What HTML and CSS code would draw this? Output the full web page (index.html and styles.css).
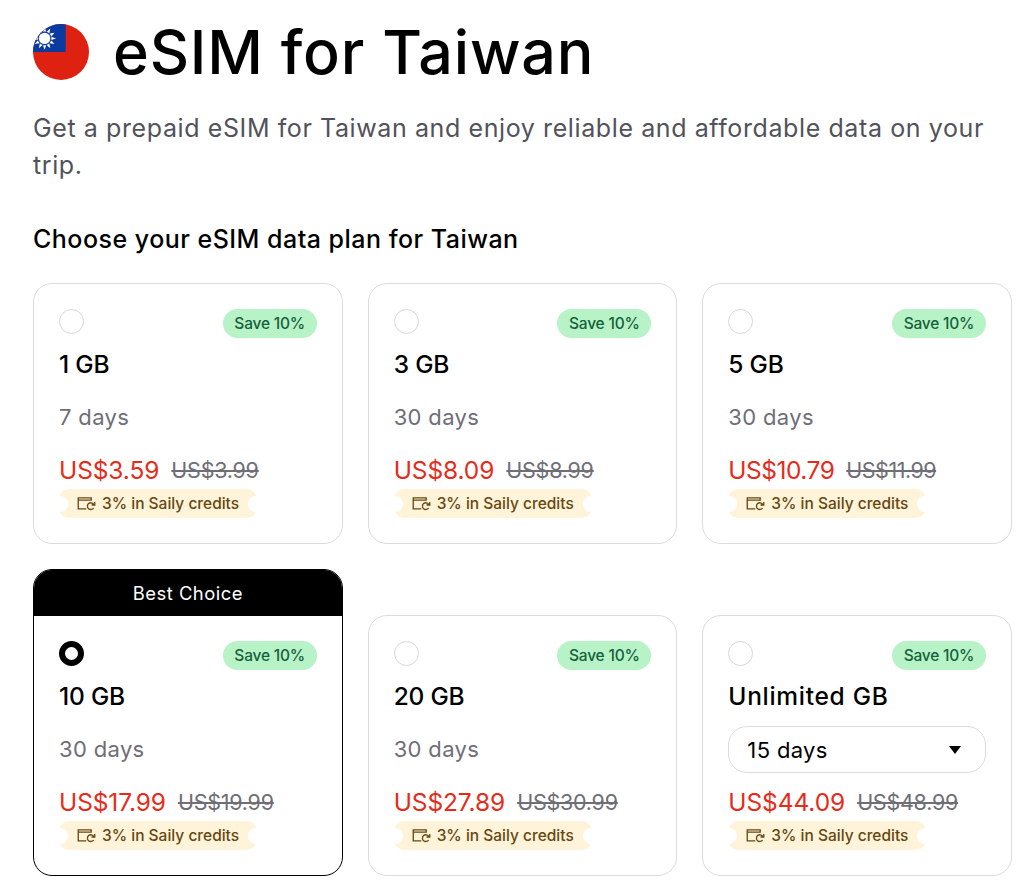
FILE: index.html
```
<!DOCTYPE html>
<html lang="en">

<head>
	<meta charset="UTF-8">
	<meta name="viewport" content="width=device-width, initial-scale=1.0">
	<title>eSIM for Taiwan</title>
	<link rel="stylesheet" href="styles.css">
</head>

<body>
	<!-- shared icon -->
	<svg class="sprite" width="0" height="0">
		<symbol id="wallet" viewBox="0 0 20 16">
			<path d="M15 5V1.9H1.2v11.8h8.6M1.2 4.4h13.8" />
			<path d="M17.6 12.8A3.6 3.6 0 1 1 17.6 8.8M18.8 6.4v3.2h-3.4" />
		</symbol>
	</svg>

	<header class="title">
		<svg class="flag" viewBox="0 0 56 56">
			<clipPath id="round"><circle cx="28" cy="28" r="28" /></clipPath>
			<g clip-path="url(#round)">
				<rect width="56" height="56" fill="#de2110" />
				<rect width="32.7" height="28" fill="#0b3aa0" />
				<g transform="translate(11.6 14.4)" fill="#fff">
					<g id="rays">
						<path d="M-1.6-6.8L0-11.4L1.6-6.8zM-1.6 6.8L0 11.4L1.6 6.8z" />
						<path d="M-1.6-6.8L0-11.4L1.6-6.8zM-1.6 6.8L0 11.4L1.6 6.8z" transform="rotate(30)" />
						<path d="M-1.6-6.8L0-11.4L1.6-6.8zM-1.6 6.8L0 11.4L1.6 6.8z" transform="rotate(60)" />
					</g>
					<use href="#rays" transform="rotate(90)" />
					<circle r="5.7" />
				</g>
			</g>
		</svg>
		<h1>eSIM for Taiwan</h1>
	</header>
	<p class="intro">Get a prepaid eSIM for Taiwan and enjoy reliable and affordable data on your trip.</p>
	<h2>Choose your eSIM data plan for Taiwan</h2>

	<div class="plans">
		<div class="plan">
			<div class="top"><span class="radio"></span><span class="save">Save 10%</span></div>
			<h3>1 GB</h3>
			<div class="days">7 days</div>
			<div class="price">US$3.59 <s>US$3.99</s></div>
			<div class="credits"><svg><use href="#wallet" /></svg>3% in Saily credits</div>
		</div>
		<div class="plan">
			<div class="top"><span class="radio"></span><span class="save">Save 10%</span></div>
			<h3>3 GB</h3>
			<div class="days">30 days</div>
			<div class="price">US$8.09 <s>US$8.99</s></div>
			<div class="credits"><svg><use href="#wallet" /></svg>3% in Saily credits</div>
		</div>
		<div class="plan">
			<div class="top"><span class="radio"></span><span class="save">Save 10%</span></div>
			<h3>5 GB</h3>
			<div class="days">30 days</div>
			<div class="price narrow">US$10.79 <s>US$11.99</s></div>
			<div class="credits"><svg><use href="#wallet" /></svg>3% in Saily credits</div>
		</div>
		<div class="plan best">
			<div class="banner">Best Choice</div>
			<div class="top"><span class="radio checked"></span><span class="save">Save 10%</span></div>
			<h3>10 GB</h3>
			<div class="days">30 days</div>
			<div class="price">US$17.99 <s>US$19.99</s></div>
			<div class="credits"><svg><use href="#wallet" /></svg>3% in Saily credits</div>
		</div>
		<div class="plan">
			<div class="top"><span class="radio"></span><span class="save">Save 10%</span></div>
			<h3>20 GB</h3>
			<div class="days">30 days</div>
			<div class="price">US$27.89 <s>US$30.99</s></div>
			<div class="credits"><svg><use href="#wallet" /></svg>3% in Saily credits</div>
		</div>
		<div class="plan">
			<div class="top"><span class="radio"></span><span class="save">Save 10%</span></div>
			<h3 class="wide">Unlimited GB</h3>
			<div class="days select">15 days<span class="arrow"></span></div>
			<div class="price">US$44.09 <s>US$48.99</s></div>
			<div class="credits"><svg><use href="#wallet" /></svg>3% in Saily credits</div>
		</div>
	</div>
</body>

</html>
```
FILE: styles.css
```
* {
	box-sizing: border-box;
}

body {
	margin: 0;
	padding: 12px 12px 0 33px;
	background: #fff;
	color: #000;
	font-family: Inter, "Open Sans", sans-serif;
	overflow: hidden;
}

h1, h2, h3, p {
	margin: 0;
	font-weight: 500;
}

.sprite {
	position: absolute;
}

.title {
	display: flex;
	align-items: center;
	gap: 24px;
	height: 80px;
}

.flag {
	width: 56px;
	height: 56px;
}

h1 {
	font-size: 61px;
	letter-spacing: 0.8px;
	line-height: 80px;
	white-space: nowrap;
}

.intro {
	margin-top: 18px;
	color: #52525b;
	font-size: 25px;
	font-weight: 400;
	letter-spacing: 0.6px;
	line-height: 37px;
}

h2 {
	margin-top: 37px;
	font-size: 25px;
	letter-spacing: 0.48px;
	line-height: 37px;
}

.plans {
	display: grid;
	grid-template-columns: repeat(3, 1fr);
	gap: 25px;
	align-items: end;
	margin-top: 25px;
}

.plan {
	height: 261px;
	padding: 25px;
	border: 1px solid #dcdcdf;
	border-radius: 19px;
}

.best {
	height: 307px;
	padding-top: 0;
	border-color: #000;
	overflow: hidden;
}

.banner {
	height: 46px;
	margin: 0 -25px 25px;
	background: #000;
	color: #fff;
	font-size: 18.4px;
	letter-spacing: 0.5px;
	line-height: 46px;
	text-align: center;
}

.top {
	display: flex;
	justify-content: space-between;
	height: 29px;
}

.radio {
	width: 25px;
	height: 25px;
	border: 1px solid #d8d8db;
	border-radius: 50%;
}

.checked {
	border: 6px solid #000;
}

.save {
	width: 94px;
	border-radius: 15px;
	background: #b8f3c8;
	color: #14613a;
	font-size: 15.5px;
	font-weight: 500;
	letter-spacing: -0.2px;
	line-height: 29px;
	text-align: center;
}

h3 {
	margin-top: 8px;
	font-size: 24.5px;
	letter-spacing: -0.2px;
	line-height: 37px;
}

.wide {
	letter-spacing: 0.7px;
}

.days {
	margin: 11px 0;
	height: 47px;
	color: #6f6e77;
	font-size: 22px;
	letter-spacing: 0.35px;
	line-height: 46px;
}

.select {
	display: flex;
	align-items: center;
	justify-content: space-between;
	padding: 0 24px 0 18px;
	border: 1px solid #dcdcdf;
	border-radius: 19px;
	color: #000;
}

.arrow {
	border: 6.5px solid transparent;
	border-top: 8px solid #000;
	border-bottom: 0;
}

.price {
	display: flex;
	align-items: center;
	gap: 12px;
	height: 37px;
	padding-bottom: 2px;
	color: #e62b1a;
	font-size: 24.5px;
	letter-spacing: -0.1px;
}

.price s {
	color: #6f6e77;
	font-size: 21.5px;
	letter-spacing: -0.25px;
}

.narrow,
.narrow s {
	letter-spacing: -0.5px;
}

.credits {
	position: relative;
	display: flex;
	align-items: center;
	width: 198px;
	height: 29px;
	padding-left: 18px;
	border-radius: 10px;
	background: #fff4d9;
	color: #664710;
	font-size: 15.5px;
	font-weight: 500;
	white-space: nowrap;
}

/* ticket notches */
.credits::before,
.credits::after {
	content: "";
	position: absolute;
	top: 6.5px;
	left: -7px;
	width: 16px;
	height: 16px;
	border-radius: 50%;
	background: #fff;
}

.credits::after {
	left: auto;
	right: -7px;
}

.credits svg {
	width: 19px;
	height: 15px;
	margin-right: 6px;
	fill: none;
	stroke: #664710;
	stroke-width: 1.4;
}
```
